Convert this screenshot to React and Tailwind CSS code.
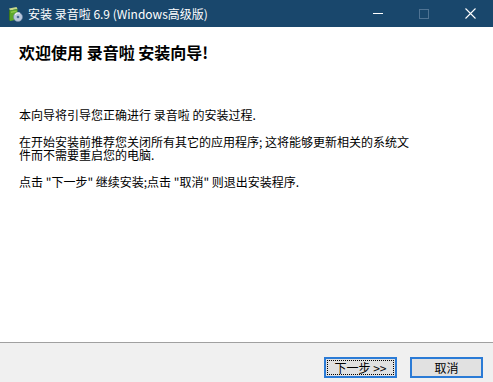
import React from 'react';

const cjk = { fontFamily: '"Noto Sans CJK SC", "Liberation Sans", sans-serif' };

const AppIcon = () => (
  <svg width="16" height="16" viewBox="0 0 16 16" className="shrink-0">
    <path d="M2 2.5 L9.5 1 L10.5 3 L3 4.5 Z" fill="#c8d98a" />
    <path d="M2 3.5 L3 4.5 L3 15 L2 14 Z" fill="#3d7a1c" />
    <path d="M3 4.5 L10.5 3 L10.5 13.5 L3 15 Z" fill="#5da82a" />
    <path d="M4 5.5 L9.5 4.4 L9.5 6 L4 7.1 Z" fill="#8cc84b" />
    <circle cx="11" cy="11" r="4.5" fill="#b9c8dc" />
    <circle cx="11" cy="11" r="4.5" fill="none" stroke="#6f84a3" strokeWidth="0.6" />
    <path d="M8 9 A4 4 0 0 1 13 7.3" stroke="#ffffff" strokeWidth="1.2" fill="none" opacity="0.8" />
    <circle cx="11" cy="11" r="1.3" fill="#4a6b93" />
  </svg>
);

const TitleBar = () => (
  <div className="flex items-center h-[27px] bg-[#19476c] text-white shrink-0">
    <div className="flex items-center pl-[7px] gap-[5px] flex-1">
      <AppIcon />
      <span className="text-[12px] leading-none" style={cjk}>安装 录音啦 6.9 (Windows高级版)</span>
    </div>
    <div className="flex h-full">
      <div className="w-[46px] flex items-center justify-center">
        <div className="w-[10px] h-px bg-white" />
      </div>
      <div className="w-[46px] flex items-center justify-center">
        <div className="w-[10px] h-[10px] border border-[#4f7393]" />
      </div>
      <div className="w-[46px] flex items-center justify-center">
        <svg width="11" height="11" viewBox="0 0 11 11">
          <path d="M0.5 0.5 L10.5 10.5 M10.5 0.5 L0.5 10.5" stroke="#ffffff" strokeWidth="1.1" />
        </svg>
      </div>
    </div>
  </div>
);

const Button = ({ children, focused }) => (
  <button className="w-[73px] h-[21px] border-2 border-[#2b7bd6] bg-[#e1e1e1] p-px">
    <div
      className={`h-full flex items-center justify-center text-[12px] text-black ${
        focused ? 'outline outline-1 outline-dotted outline-black -outline-offset-1' : ''
      }`}
      style={cjk}
    >
      {children}
    </div>
  </button>
);

export default function App() {
  return (
    <div className="w-[493px] h-[382px] flex flex-col bg-white overflow-hidden">
      <TitleBar />
      <div className="flex-1 pl-[19px] pt-[15px] text-black" style={cjk}>
        <h1 className="text-[16px] leading-[20px] font-bold">欢迎使用 录音啦 安装向导!</h1>
        <div className="mt-[46px] text-[12px] leading-[13px] flex flex-col gap-[14px]">
          <p>本向导将引导您正确进行 录音啦 的安装过程.</p>
          <p>
            在开始安装前推荐您关闭所有其它的应用程序; 这将能够更新相关的系统文
            <br />
            件而不需要重启您的电脑.
          </p>
          <p>点击 "下一步" 继续安装;点击 "取消" 则退出安装程序.</p>
        </div>
      </div>
      <div className="h-px bg-[#a0a0a0] shrink-0" />
      <div className="h-[39px] bg-[#f0f0f0] flex items-start justify-end gap-[13px] pt-[14px] pr-[10px] shrink-0">
        <Button focused>下一步 &gt;&gt;</Button>
        <Button>取消</Button>
      </div>
    </div>
  );
}
